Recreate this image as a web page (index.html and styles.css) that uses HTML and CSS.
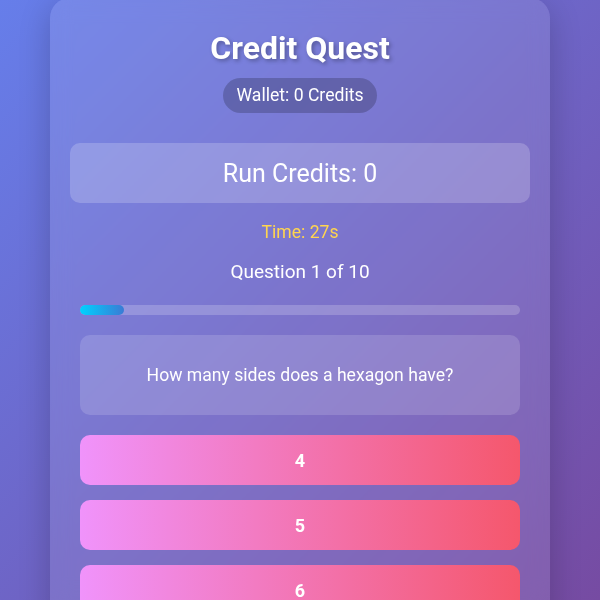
FILE: index.html
```html
<!DOCTYPE html>
<html>
<head>
<meta charset="utf-8">
<link rel="stylesheet" href="styles.css">
</head>
<body>
<div class="card">
  <h1 class="title">Credit Quest</h1>
  <div class="wallet-row"><span class="wallet">Wallet: 0 Credits</span></div>
  <div class="run-credits">Run Credits: 0</div>
  <div class="quiz">
    <div class="timer">Time: 27s</div>
    <div class="counter">Question 1 of 10</div>
    <div class="progress"><div class="progress-fill" style="width:10%"></div></div>
    <div class="question">How many sides does a hexagon have?</div>
    <div class="answers">
      <button class="answer">4</button>
      <button class="answer">5</button>
      <button class="answer">6</button>
      <button class="answer">8</button>
    </div>
  </div>
</div>
</body>
</html>
```
FILE: styles.css
```css
html, body {
  margin: 0;
  padding: 0;
  height: 100%;
  overflow: hidden;
}
body {
  font-family: Roboto, "Liberation Sans", sans-serif;
  background: linear-gradient(135deg, #667eea 0%, #764ba2 100%);
  color: #fff;
  display: flex;
  justify-content: center;
  align-items: flex-start;
}
.card {
  width: 500px;
  box-sizing: border-box;
  margin-top: -2px;
  padding: 32px 20px 40px;
  background: rgba(255, 255, 255, 0.1);
  border-radius: 20px;
  box-shadow: 0 8px 32px rgba(0, 0, 0, 0.2);
  backdrop-filter: blur(10px);
}
.title {
  margin: 0 0 12px;
  font-size: 32px;
  line-height: 36px;
  font-weight: 700;
  text-align: center;
  text-shadow: 2px 2px 4px rgba(0, 0, 0, 0.3);
}
.wallet-row {
  display: flex;
  justify-content: center;
}
.wallet {
  display: inline-block;
  background: rgba(0, 0, 0, 0.2);
  padding: 8px 13px;
  border-radius: 20px;
  font-size: 17.6px;
  line-height: 19px;
}
.run-credits {
  margin-top: 30px;
  height: 60px;
  display: flex;
  align-items: center;
  justify-content: center;
  background: rgba(255, 255, 255, 0.2);
  border-radius: 10px;
  font-size: 25px;
}
.quiz {
  padding: 0 10px;
}
.timer {
  margin-top: 19px;
  text-align: center;
  color: #ffd54f;
  font-size: 17.6px;
  line-height: 20px;
}
.counter {
  margin-top: 19px;
  text-align: center;
  font-size: 19px;
  line-height: 22px;
}
.progress {
  margin-top: 22px;
  height: 10px;
  border-radius: 5px;
  background: rgba(255, 255, 255, 0.2);
  overflow: hidden;
}
.progress-fill {
  height: 100%;
  border-radius: 5px;
  background: linear-gradient(90deg, #00d2ff, #3a7bd5);
}
.question {
  margin-top: 20px;
  height: 80px;
  display: flex;
  align-items: center;
  justify-content: center;
  background: rgba(255, 255, 255, 0.15);
  border-radius: 10px;
  font-size: 17.6px;
}
.answers {
  margin-top: 20px;
  display: flex;
  flex-direction: column;
  gap: 15px;
}
.answer {
  height: 50px;
  border: none;
  border-radius: 10px;
  background: linear-gradient(90deg, #f093fb 0%, #f5576c 100%);
  color: #fff;
  font-family: Roboto, "Liberation Sans", sans-serif;
  font-size: 18px;
  font-weight: 700;
  padding: 0;
}
```
